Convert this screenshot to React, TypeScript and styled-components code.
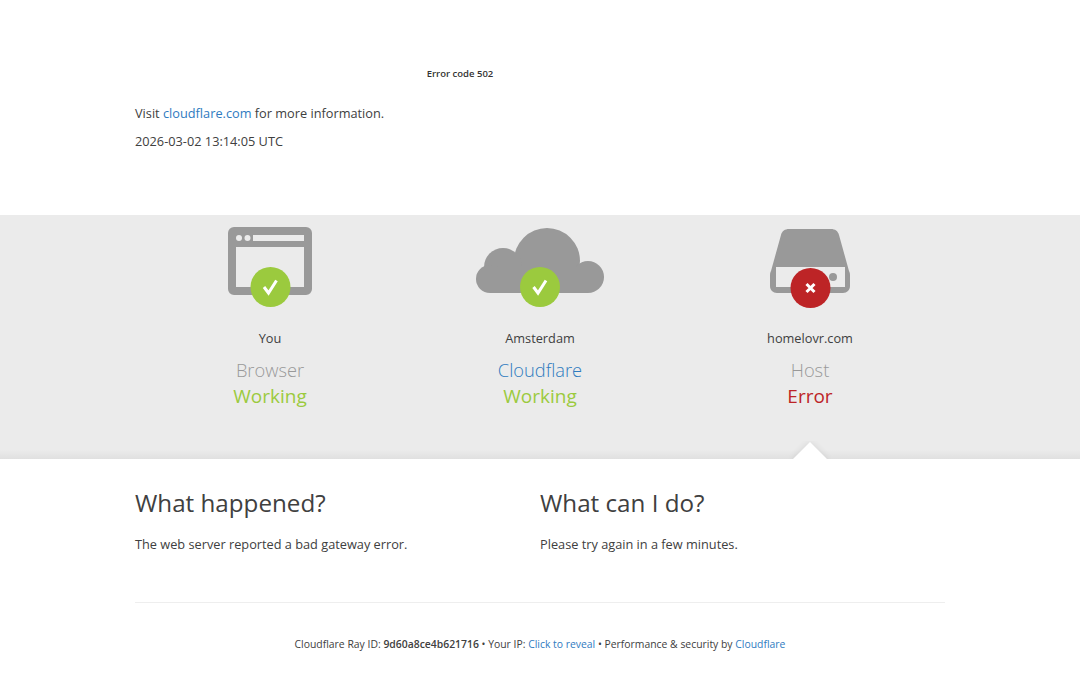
import React, { FC } from "react"
import styled, { createGlobalStyle } from "styled-components"

const GREEN = "#9bca3e"
const RED = "#bd2426"
const ICON_GREY = "#999"
const BAND_GREY = "#ebebeb"

const GlobalStyle = createGlobalStyle`
  html, body {
    margin: 0;
    padding: 0;
    background: #fff;
    color: #404040;
    font-family: "Open Sans", "Noto Sans", "Liberation Sans", sans-serif;
  }
  a {
    text-decoration: none;
  }
`

const Wrapper = styled.div`
  width: 810px;
  margin: 0 auto;
`

const Header = styled.header`
  height: 215px;
  box-sizing: border-box;
  padding-top: 68px;
`

const ErrorCode = styled.div`
  width: 650px;
  height: 12px;
  text-align: center;
  font-size: 9.5px;
  line-height: 12px;
  font-weight: 600;
  color: #333;
`

const Info = styled.p<{ $top: number }>`
  margin: 0;
  font-size: 12.75px;
  line-height: 18px;
  margin-top: ${(p) => p.$top}px;
`

const Link = styled.a`
  color: #2f7bbf;
`

const Band = styled.section`
  position: relative;
  height: 244px;
  background: linear-gradient(
    to bottom,
    ${BAND_GREY} calc(100% - 9px),
    #e0e0e0 100%
  );
`

const Columns = styled.div`
  display: grid;
  grid-template-columns: repeat(3, 1fr);
`

const Source = styled.div`
  display: flex;
  flex-direction: column;
  align-items: center;
  padding-top: 12px;
`

const IconBox = styled.div`
  height: 70px;
  display: flex;
  justify-content: center;
`

const Location = styled.div`
  margin-top: 32px;
  font-size: 12.75px;
  line-height: 18px;
`

const SourceName = styled.div<{ $accent?: boolean }>`
  margin-top: 10px;
  font-size: 18.3px;
  line-height: 26px;
  font-weight: 300;
  color: ${(p) => (p.$accent ? "#2f7bbf" : "#999")};
`

const Status = styled.div<{ $error?: boolean }>`
  font-size: 19px;
  line-height: 26px;
  color: ${(p) => (p.$error ? RED : GREEN)};
`

const Notch = styled.div`
  position: absolute;
  left: 785px;
  bottom: 0;
  width: 50px;
  height: 18px;
  overflow: hidden;

  &::after {
    content: "";
    position: absolute;
    left: 13px;
    top: 6px;
    width: 24px;
    height: 24px;
    background: #fff;
    transform: rotate(45deg);
    box-shadow: 0 0 7px rgba(0, 0, 0, 0.1);
  }
`

const Explain = styled.section`
  display: grid;
  grid-template-columns: 1fr 1fr;
  padding-top: 27px;
  height: 144px;
  box-sizing: border-box;
  border-bottom: 1px solid #eee;
`

const Heading = styled.h2`
  margin: 0;
  font-size: 24.2px;
  line-height: 34px;
  font-weight: 400;
  color: #404040;
`

const Body = styled.p`
  margin: 15px 0 0;
  font-size: 12.75px;
  line-height: 18px;
`

const Footer = styled.footer`
  padding-top: 34px;
  text-align: center;
  font-size: 10.4px;
  line-height: 15px;
`

const Ray = styled.strong`
  font-weight: 600;
`

const Badge: FC<{ cx: number; cy: number; ok: boolean }> = ({ cx, cy, ok }) => (
  <g>
    <circle cx={cx} cy={cy} r={20} fill={ok ? GREEN : RED} />
    {ok ? (
      <path
        d={`M${cx - 6.5} ${cy}l4.5 6 8-12.500`}
        fill="none"
        stroke="#fff"
        strokeWidth={3}
      />
    ) : (
      <path
        d={`M${cx - 4} ${cy - 4}l8 8M${cx + 4} ${cy - 4}l-8 8`}
        fill="none"
        stroke="#fff"
        strokeWidth={3}
      />
    )}
  </g>
)

const BrowserIcon = () => (
  <svg width={84} height={82} viewBox="0 0 84 82">
    <path
      fillRule="evenodd"
      fill={ICON_GREY}
      d="M6 0h72a6 6 0 0 1 6 6v56a6 6 0 0 1-6 6H6a6 6 0 0 1-6-6V6a6 6 0 0 1 6-6zM8 20v40h68V20z"
    />
    <circle cx={11} cy={11} r={3} fill={BAND_GREY} />
    <circle cx={19.5} cy={11} r={3} fill={BAND_GREY} />
    <rect x={25} y={8} width={51} height={6} fill={BAND_GREY} />
    <Badge cx={42.5} cy={60} ok />
  </svg>
)

const CloudIcon = () => (
  <svg width={128} height={82} viewBox="0 0 128 82">
    <g fill={ICON_GREY}>
      <circle cx={71} cy={34} r={33} />
      <circle cx={27} cy={40} r={19} />
      <circle cx={14} cy={52} r={14} />
      <circle cx={112} cy={50} r={16} />
      <rect x={14} y={40} width={98} height={26} />
    </g>
    <Badge cx={64} cy={60} ok />
  </svg>
)

const ServerIcon = () => (
  <svg width={80} height={82} viewBox="0 0 80 82">
    <path
      fillRule="evenodd"
      fill={ICON_GREY}
      d="M19 2h42c4 0 7 2 8 6l10 36c1 2 1 3 1 5v10c0 4-3 7-7 7H7c-4 0-7-3-7-7V49c0-2 0-3 1-5L11 8c1-4 4-6 8-6zM6 40v20h69V40z"
    />
    <circle cx={63} cy={50} r={4} fill={ICON_GREY} />
    <Badge cx={40.5} cy={61} ok={false} />
  </svg>
)

const App: FC = () => (
  <>
    <GlobalStyle />
    <Wrapper>
      <Header>
        <ErrorCode>Error code 502</ErrorCode>
        <Info $top={24}>
          Visit <Link href="#">cloudflare.com</Link> for more information.
        </Info>
        <Info $top={10}>2026-03-02 13:14:05 UTC</Info>
      </Header>
    </Wrapper>
    <Band>
      <Wrapper>
        <Columns>
          <Source>
            <IconBox>
              <BrowserIcon />
            </IconBox>
            <Location>You</Location>
            <SourceName>Browser</SourceName>
            <Status>Working</Status>
          </Source>
          <Source>
            <IconBox>
              <CloudIcon />
            </IconBox>
            <Location>Amsterdam</Location>
            <SourceName $accent>Cloudflare</SourceName>
            <Status>Working</Status>
          </Source>
          <Source>
            <IconBox>
              <ServerIcon />
            </IconBox>
            <Location>homelovr.com</Location>
            <SourceName>Host</SourceName>
            <Status $error>Error</Status>
          </Source>
        </Columns>
      </Wrapper>
      <Notch />
    </Band>
    <Wrapper>
      <Explain>
        <div>
          <Heading>What happened?</Heading>
          <Body>The web server reported a bad gateway error.</Body>
        </div>
        <div>
          <Heading>What can I do?</Heading>
          <Body>Please try again in a few minutes.</Body>
        </div>
      </Explain>
      <Footer>
        Cloudflare Ray ID: <Ray>9d60a8ce4b621716</Ray> • Your IP:{" "}
        <Link href="#">Click to reveal</Link> • Performance &amp; security by{" "}
        <Link href="#">Cloudflare</Link>
      </Footer>
    </Wrapper>
  </>
)

export default App
